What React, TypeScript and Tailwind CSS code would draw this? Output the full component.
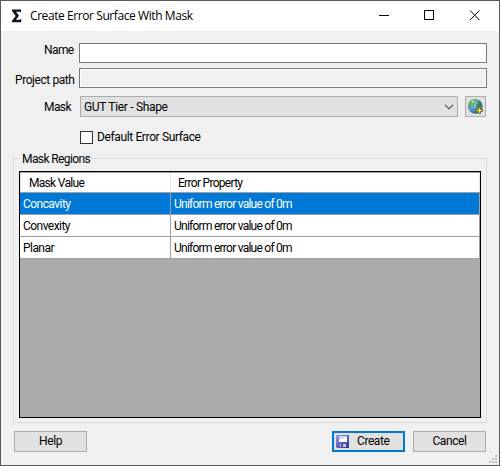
import React from 'react';

function SigmaIcon() {
  return (
    <svg width="10" height="14" viewBox="0 0 10 14" className="ml-[11px] mt-[8px] shrink-0">
      <path d="M0 0.5H9V3.2H8.2L7.8 2.8H4L7 6.8L3.9 10.7H8L8.4 10H9.2V13.2H0V11.8L3.7 7L0 2Z" fill="#111" />
    </svg>
  );
}

function GlobeAddIcon() {
  return (
    <svg width="17" height="17" viewBox="0 0 17 17">
      <defs>
        <radialGradient id="sea" cx="0.38" cy="0.3" r="0.75">
          <stop offset="0" stopColor="#8fc0e8" />
          <stop offset="0.6" stopColor="#5590d8" />
          <stop offset="1" stopColor="#2a5ba8" />
        </radialGradient>
      </defs>
      <circle cx="8.3" cy="8.3" r="7.4" fill="url(#sea)" />
      <path d="M2 4.4C3.5 2 6 1 8.3 1L10 1.8L8.7 3.4L9.3 4.8L7.4 5.6L6.6 7.6L4.8 7.8L3.8 9.6L1.7 8.6L1.1 6.8Z" fill="#5fb35c" />
      <path d="M4.5 3.1L7.4 1.8L7.3 3.7L5.5 5.2Z" fill="#b4e2ac" />
      <path d="M10.6 2.2C13 3.2 14.9 5.2 15.4 7.7L13.4 8.6L12.5 11L10.2 9.4L9.5 6.6L11.3 5.1Z" fill="#33863a" />
      <path d="M7 10.6L10 11.4L10.4 13.2L8.3 15.4L6.9 13.3Z" fill="#39983f" />
      <path d="M11.5 9.5H13.5V11.5H15.5V13.5H13.5V15.5H11.5V13.5H9.5V11.5H11.5Z" fill="#fff36a" stroke="#6b6520" strokeWidth="1" />
    </svg>
  );
}

function SaveIcon() {
  return (
    <svg width="13" height="13" viewBox="0 0 13 13" className="shrink-0">
      <defs>
        <linearGradient id="disk" x1="0" y1="0" x2="1" y2="1">
          <stop offset="0" stopColor="#9498e2" />
          <stop offset="1" stopColor="#2c2ca0" />
        </linearGradient>
      </defs>
      <path d="M0 0H13V13H1L0 12Z" fill="url(#disk)" />
      <path d="M3 1H11V7H3Z" fill="#ccd8f6" />
      <path d="M3 5L11 2V7H3Z" fill="#fff" />
      <path d="M4 9H10V12H4Z" fill="#c3c8dc" />
      <path d="M5 9H7V12H5Z" fill="#4a4aa8" />
    </svg>
  );
}

function Row({ name, selected = false }: { name: string; selected?: boolean }) {
  return (
    <div className={`flex h-[22px] border-b border-[#a0a0a0] leading-[23px] ${selected ? 'bg-[#0078d7] text-white' : 'bg-white'}`}>
      <div className="w-[151px] border-r border-[#a0a0a0] pl-[3px] tracking-[-0.55px]">{name}</div>
      <div className="flex-1 border-r border-[#a0a0a0] pl-[3px] tracking-[-0.75px]">Uniform error value of 0m</div>
    </div>
  );
}

export default function App() {
  return (
    <div className="flex h-[466px] w-[500px] flex-col overflow-hidden border border-[#5a5a5a] bg-[#f0f0f0] font-['Roboto',sans-serif] text-[12px] tracking-[-0.42px] text-black whitespace-nowrap">
      <header className="flex h-[30px] shrink-0 bg-white">
        <SigmaIcon />
        <div className="ml-[8px] w-[340px] font-['Open_Sans',sans-serif] text-[12px] leading-[30px] tracking-[-0.42px]">Create Error Surface With Mask</div>
        <svg width="102" height="11" viewBox="0 0 102 11" className="ml-[9px] mt-[9px]" shapeRendering="crispEdges">
          <path d="M0 5.5H10M45.5 .5H54.5V9.5H45.5Z" fill="none" stroke="#000" />
          <path d="M91 .5L100.5 10M100.5 .5L91 10" stroke="#000" shapeRendering="auto" />
        </svg>
      </header>

      <div className="mt-[12px] flex h-[20px] shrink-0">
        <div className="w-[78px] pl-[43px] leading-[15px] tracking-[-0.6px]">Name</div>
        <div className="w-[408px] border border-[#7a7a7a] bg-white" />
      </div>
      <div className="mt-[5px] flex h-[20px] shrink-0">
        <div className="w-[78px] pl-[14px] leading-[24px]">Project path</div>
        <div className="w-[408px] border border-[#7a7a7a] p-px bg-white"><div className="h-full bg-[#f0f0f0]" /></div>
      </div>
      <div className="mt-[8px] flex h-[21px] shrink-0">
        <div className="w-[79px] pl-[43px] leading-[22px] tracking-[-0.6px]">Mask</div>
        <div className="flex w-[378px] justify-between border border-[#adadad] bg-[#e1e1e1] pl-[3px] pr-[3px] leading-[21px] tracking-[-0.32px]">
          <span>GUT Tier - Shape</span>
          <svg width="10" height="6" viewBox="0 0 10 6" className="mt-[7px]"><path d="M1 .8L5 4.8L9 .8" fill="none" stroke="#444" strokeWidth="1.1" /></svg>
        </div>
        <div className="ml-[7px] flex w-[21px] items-center justify-center border border-[#adadad] bg-[#e1e1e1]"><GlobeAddIcon /></div>
      </div>
      <div className="mt-[14px] flex h-[13px] shrink-0 pl-[79px]">
        <div className="w-[13px] border border-[#333] bg-white" />
        <span className="ml-[4px] leading-[12px] tracking-[-0.37px]">Default Error Surface</span>
      </div>

      <div className="ml-[12px] mt-[14px] h-[265px] w-[474px] shrink-0 border border-[#dcdcdc] pl-[5px]">
        <div className="ml-[1px] h-[12px] w-[72px] -mt-px bg-[#f0f0f0] pl-[2px] leading-[3px] tracking-[-0.6px]">Mask Regions</div>
        <div className="mt-px flex h-[247px] w-[462px] flex-col border border-black bg-[#ababab]">
          <div className="flex h-[21px] shrink-0 border-b border-t border-b-[#a0a0a0] border-t-[#a0a0a0] bg-white leading-[21px] tracking-[-0.7px]">
            <div className="w-[151px] border-l border-r border-l-[#e5e5e5] border-r-[#e5e5e5] pl-[8px]">Mask Value</div>
            <div className="flex-1 border-r border-[#e5e5e5] pl-[7px]">Error Property</div>
          </div>
          <Row name="Concavity" selected />
          <Row name="Convexity" />
          <Row name="Planar" />
        </div>
      </div>

      <footer className="mt-[8px] flex h-[21px] shrink-0 pl-[13px] leading-[19px]">
        <div className="w-[73px] border border-[#adadad] bg-[#e1e1e1] text-center">Help</div>
        <div className="ml-[245px] flex w-[73px] items-center border-2 border-[#0078d7] bg-[#e1e1e1] pl-[2px]">
          <SaveIcon />
          <span className="ml-[8px] leading-[17px]">Create</span>
        </div>
        <div className="ml-[8px] w-[73px] border border-[#adadad] bg-[#e1e1e1] text-center">Cancel</div>
      </footer>
      <svg width="8" height="8" viewBox="0 0 8 8" className="ml-[488px] mt-[3px] shrink-0" shapeRendering="crispEdges">
        <path d="M6 0h2v2h-2zM3 3h2v2h-2zM6 3h2v2h-2zM0 6h2v2h-2zM3 6h2v2h-2zM6 6h2v2h-2z" fill="#bfbfbf" />
      </svg>
    </div>
  );
}
